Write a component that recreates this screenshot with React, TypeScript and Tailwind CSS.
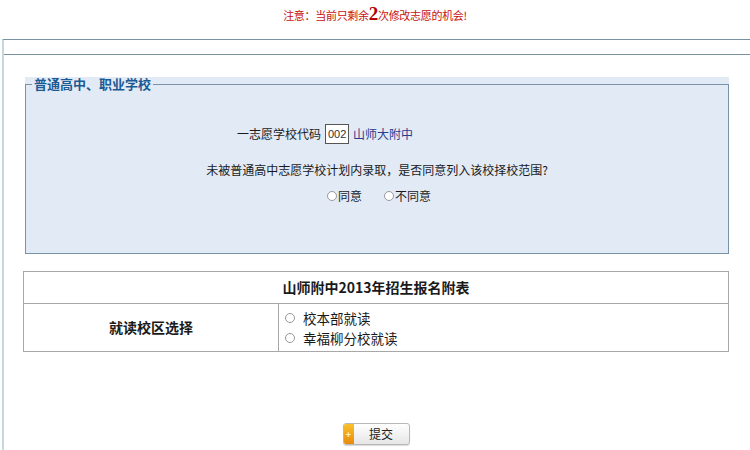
import React from "react";

function Radio() {
  return <span className="inline-block h-[10px] w-[10px] rounded-full border border-[#9a9a9a] bg-white" />;
}

export default function App() {
  return (
    <div className="h-[450px] w-[750px] overflow-hidden bg-white font-['Noto_Sans_CJK_SC',sans-serif] text-[12px] text-[#1a1a1a]">
      <div className="flex h-[39px] items-start justify-center pt-[5px]">
        <p className="tracking-[-0.3px] text-[11px] leading-[18px] text-[#c81010]">
          注意：当前只剩余
          <span className="font-['Liberation_Serif',serif] text-[19px] font-bold leading-[18px] text-[#b00000]">2</span>
          次修改志愿的机会!
        </p>
      </div>

      <div className="ml-[2px] h-[411px] border-l-2 border-l-[#c4dada] border-t border-t-[#7890a0]">
        <div className="h-[15px] border-b border-b-[#7890a0]" />

        <div className="ml-[21px] mr-[21px] mt-[22px] bg-[#e2eaf6] pt-[7px]">
          <div className="relative h-[170px] border border-[#7a92a8]">
            <span className="absolute -top-[8px] left-[6px] bg-[#e2eaf6] px-[2px] text-[13px] font-bold leading-[14px] text-[#1c5a94]">
              普通高中、职业学校
            </span>
            <div className="mt-[39px] flex items-center justify-center gap-[4px] pr-[104px]">
              <span>一志愿学校代码</span>
              <span className="flex h-[20px] w-[24px] items-center border border-[#555] bg-white pl-[2px] font-['Liberation_Sans',sans-serif] text-[11px] text-[#333]">
                002
              </span>
              <span className="text-[#2a3c8c]">山师大附中</span>
            </div>
            <p className="mt-[17px] text-center">未被普通高中志愿学校计划内录取，是否同意列入该校择校范围?</p>
            <div className="mt-[8px] flex items-center justify-center gap-[22px] pl-[4px]">
              <label className="flex items-center gap-[1px]">
                <Radio />
                同意
              </label>
              <label className="flex items-center gap-[1px]">
                <Radio />
                不同意
              </label>
            </div>
          </div>
        </div>

        <table className="ml-[19px] mt-[17px] w-[706px] border-collapse border border-[#a8a8a8] text-[14px]">
          <tbody>
            <tr className="h-[32px]">
              <td colSpan={2} className="border border-[#a8a8a8] text-center font-bold">
                山师附中2013年招生报名附表
              </td>
            </tr>
            <tr className="h-[48px]">
              <td className="w-[255px] border border-[#a8a8a8] text-center font-bold">就读校区选择</td>
              <td className="border border-[#a8a8a8] pl-[6px] text-[13.5px] leading-[20px]">
                <div className="flex items-center gap-[8px]">
                  <Radio />
                  校本部就读
                </div>
                <div className="flex items-center gap-[8px]">
                  <Radio />
                  幸福柳分校就读
                </div>
              </td>
            </tr>
          </tbody>
        </table>

        <div className="mt-[71px] flex justify-center pr-[2px]">
          <button className="flex h-[22px] w-[67px] overflow-hidden rounded-[3px] border border-[#b8b8b8] bg-gradient-to-b from-white to-[#e6e6e6] shadow-[0_1px_1px_rgba(0,0,0,0.15)]">
            <span className="flex h-full w-[10px] items-center justify-center bg-gradient-to-b from-[#f9c02a] to-[#e98a0c] text-[9px] font-bold leading-none text-[#fff3c8]">
              +
            </span>
            <span className="flex flex-1 items-center justify-center text-[12px] text-[#222]">提交</span>
          </button>
        </div>
      </div>
    </div>
  );
}
